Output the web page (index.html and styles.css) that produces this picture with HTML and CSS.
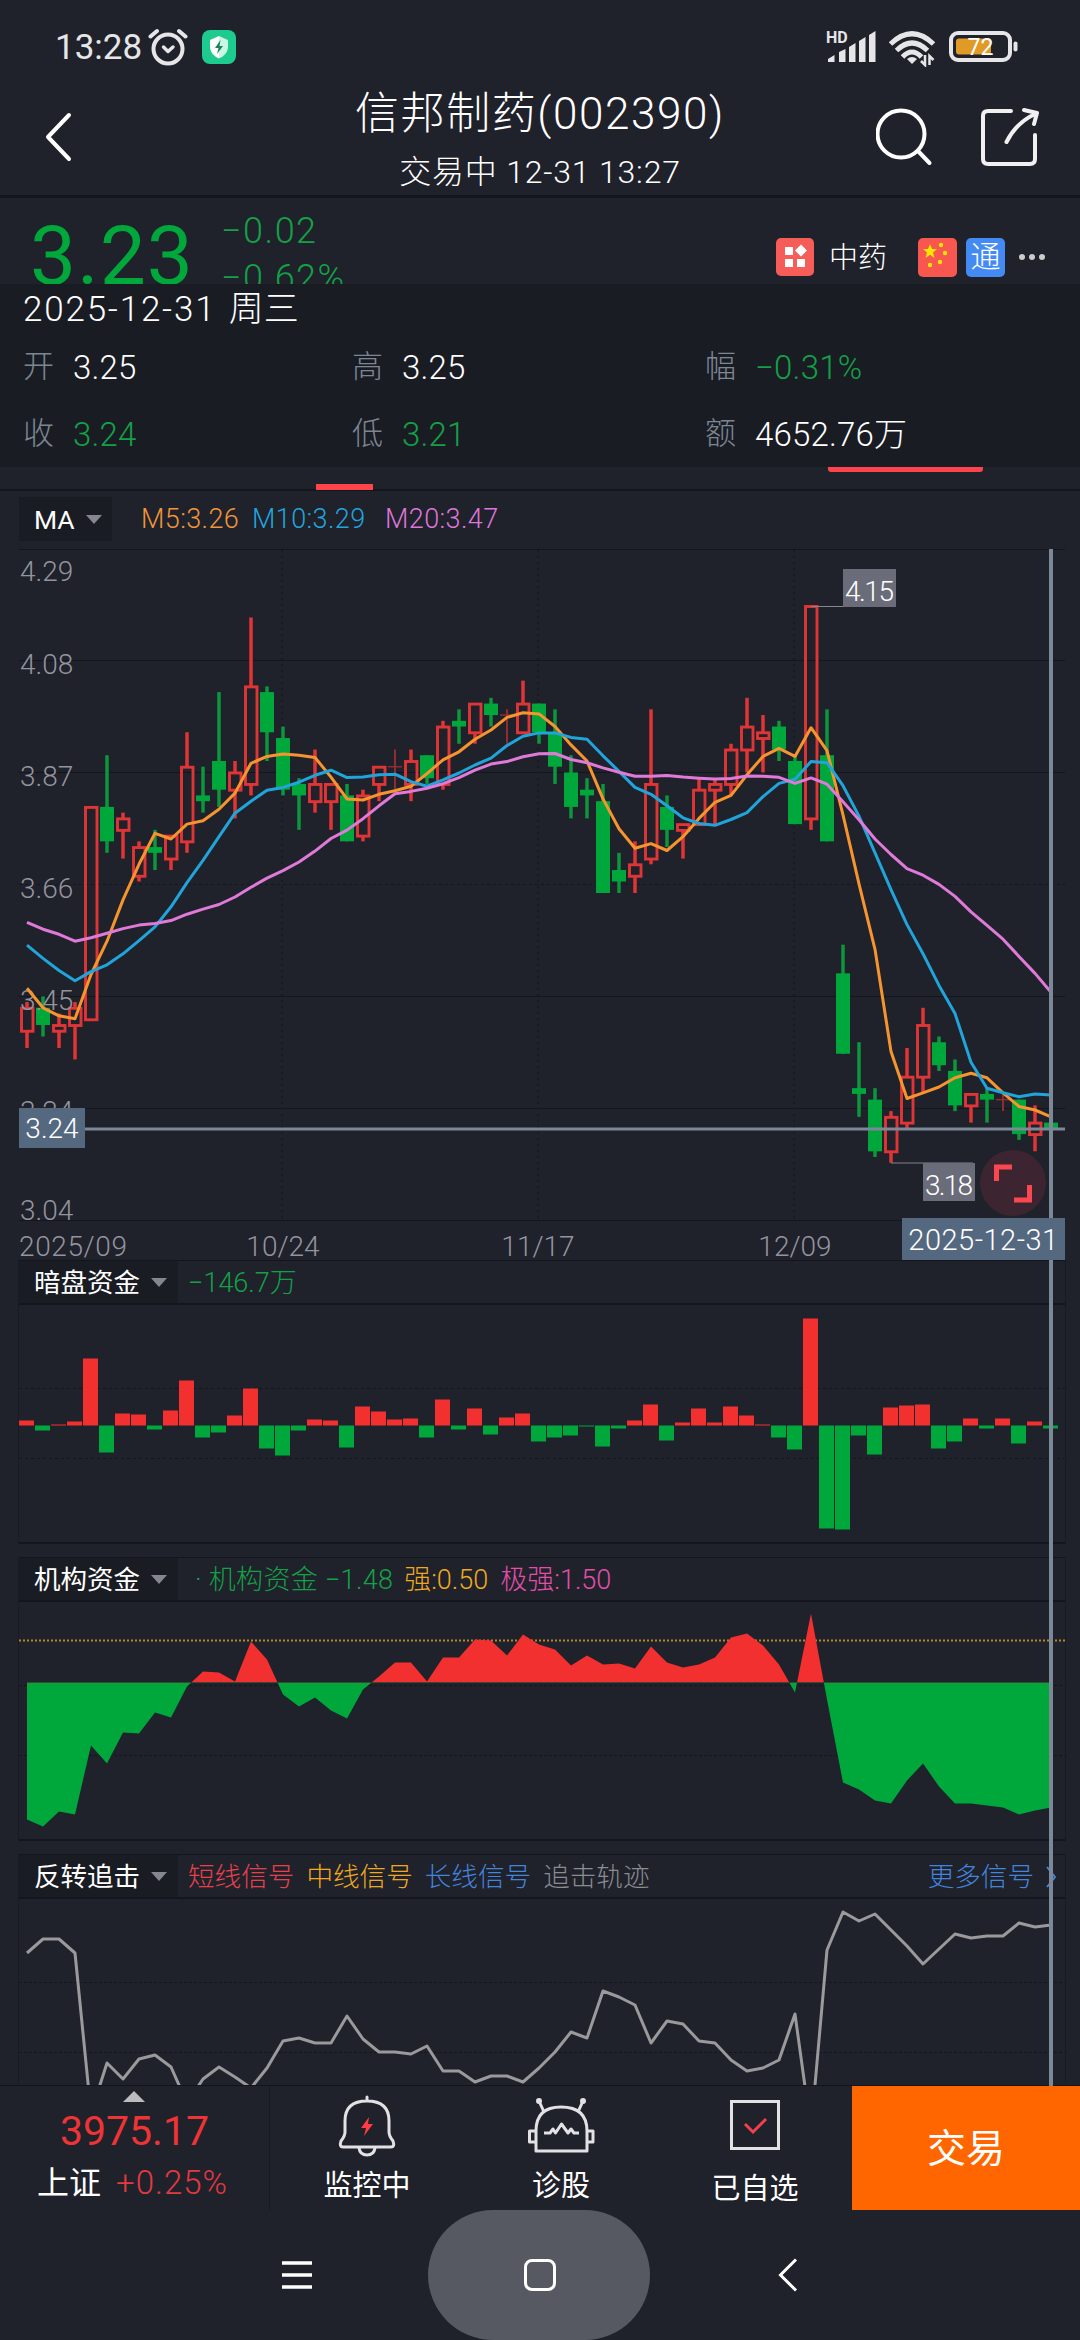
FILE: index.html
```html
<!DOCTYPE html>
<html lang="zh-CN">
<head>
    <meta charset="UTF-8">
    <title>信邦制药(002390)</title>
    <link rel="stylesheet" href="styles.css">
</head>
<body>
<div class="phone">

    <div class="status">
        <div class="status-left">
            <span class="time">13:28</span>
            <svg class="alarm" width="40" height="38" viewBox="0 0 40 38" fill="none" stroke="#e6e6e8" stroke-linecap="round">
                <circle cx="20" cy="21" r="14.5" stroke-width="4"/>
                <path d="M2.500 8.500 L9 3 M37.500 8.500 L31 3" stroke-width="4"/>
                <path d="M15.500 19 L20 23.500 L25 19" stroke-width="3.500" stroke-linejoin="round"/>
            </svg>
            <svg width="34" height="34" viewBox="0 0 34 34">
                <rect width="34" height="34" rx="8" fill="#1dcb8e"/>
                <path d="M17 6 L8 10 V18 Q9 25 17 28.500Z" fill="#fff"/>
                <path d="M17 6 L26 10 V18 Q25 25 17 28.500Z" fill="#c9f6e5"/>
                <path d="M18.500 10 L13 18 H16.500 L15 24 L21 16 H17.500Z" fill="#17845f"/>
            </svg>
        </div>
        <div class="status-right">
            <svg width="51" height="34" viewBox="-1 0 51 34" fill="#e6e6e8">
                <text x="0" y="13" class="hd">HD</text>
                <path d="M2 32 V29 L8.500 25 V32Z M13 32 V22 L19.500 19 V32Z M23 32 V17 L29.500 13 V32Z M33 32 V11 L39.500 7 V32Z M43 32 V5 L49.500 1 V32Z"/>
            </svg>
            <svg class="wifi" width="47" height="36" viewBox="0 0 47 36" fill="none" stroke="#e6e6e8" stroke-width="5">
                <path d="M1.500 13 Q23 -7.500 44.500 13"/>
                <path d="M7.500 19.500 Q23 4.500 38.500 19.500"/>
                <path d="M13.500 26 Q23 16 32.500 26"/>
                <path d="M18 28 Q23 24 28 28 L23 33Z" fill="#e6e6e8" stroke="none"/>
                <path d="M36 24 V34 L32 30 M40.500 34 V25 L44.500 29" stroke-width="2.500"/>
            </svg>
            <svg width="69" height="32" viewBox="0 0 69 32">
                <rect x="2" y="2" width="59" height="27" rx="7" fill="none" stroke="#e6e6e8" stroke-width="4"/>
                <rect x="7" y="7.500" width="35" height="16" rx="3" fill="#e09a25"/>
                <rect x="64.500" y="10.500" width="4" height="10" rx="2" fill="#e6e6e8"/>
                <text x="31.500" y="24" class="battery">72</text>
            </svg>
        </div>
    </div>

    <div class="header">
        <svg class="back" width="30" height="50" viewBox="0 0 30 50" fill="none" stroke="#fff" stroke-width="4" stroke-linecap="round" stroke-linejoin="round">
            <path d="M26 3 L5 25 L26 47"/>
        </svg>
        <div class="title">
            <div class="name">信邦制药(002390)</div>
            <div class="state">交易中 12-31 13:27</div>
        </div>
        <div class="actions">
            <svg width="58" height="60" viewBox="0 0 58 60" fill="none" stroke="#fff" stroke-width="4" stroke-linecap="round">
                <circle cx="25" cy="27" r="23.500"/>
                <path d="M42 44 L53.500 56"/>
            </svg>
            <svg width="60" height="60" viewBox="0 0 60 60" fill="none" stroke="#f0f0f0" stroke-width="4" stroke-linecap="round" stroke-linejoin="round">
                <path d="M31 4 H8 Q3 4 3 9 V52 Q3 57 8 57 H50 Q55 57 55 52 V28"/>
                <path d="M26.500 35 Q36 16 55 7 M44 3 L57 6 L54 17"/>
            </svg>
        </div>
    </div>

    <div class="quote">
        <div class="price">3.23</div>
        <div class="change">
            <div>−0.02</div>
            <div>−0.62%</div>
        </div>
        <div class="tags">
            <svg width="38" height="38" viewBox="0 0 38 38">
                <rect width="38" height="38" rx="5" fill="#f65c58"/>
                <path d="M9 9 h8 v8 h-8z M9 21 h8 v8 h-8z M21 21 h8 v8 h-8z M25 6.500 l6 6 l-6 6 l-6 -6z" fill="#fff"/>
            </svg>
            <span class="sector">中药</span>
            <svg width="39" height="39" viewBox="0 0 39 39">
                <rect width="39" height="39" rx="5" fill="#f8574f"/>
                <g fill="#ffe600">
                    <path d="M12 6 l2 5 h5 l-4 3.500 l1.500 5.500 l-4.500 -3.200 l-4.500 3.200 l1.500 -5.500 l-4 -3.500 h5z"/>
                    <circle cx="23" cy="7" r="2.200"/>
                    <circle cx="27" cy="15" r="2.200"/>
                    <circle cx="22" cy="24" r="2.200"/>
                    <circle cx="12" cy="27" r="2.200"/>
                </g>
            </svg>
            <span class="tong">通</span>
            <svg class="dots" width="28" height="8" viewBox="0 0 28 8" fill="#ccc">
                <circle cx="4" cy="4" r="3"/><circle cx="14" cy="4" r="3"/><circle cx="24" cy="4" r="3"/>
            </svg>
        </div>
    </div>

    <div class="info">
        <div class="info-date">2025-12-31 <span>周三</span></div>
        <div class="info-grid">
            <div><label>开</label><b>3.25</b></div>
            <div><label>高</label><b>3.25</b></div>
            <div><label>幅</label><b class="down">−0.31%</b></div>
            <div><label>收</label><b class="down">3.24</b></div>
            <div><label>低</label><b class="down">3.21</b></div>
            <div><label>额</label><b>4652.76万</b></div>
        </div>
    </div>

    <div class="tabs">
        <div class="tab-line small"></div>
        <div class="tab-line wide"></div>
    </div>

    <div class="ma-row">
        <div class="select ma">MA<i></i></div>
        <span class="m5">M5:3.26</span>
        <span class="m10">M10:3.29</span>
        <span class="m20">M20:3.47</span>
    </div>

    <div class="charts">
        <svg id="kline" class="kline" width="1080" height="711" viewBox="0 549 1080 711"></svg>

        <div class="panel">
            <div class="panel-head">
                <div class="select">暗盘资金<i></i></div>
                <span class="down">−146.7万</span>
            </div>
            <svg id="bars" width="1046" height="238" viewBox="19 1305 1046 238"></svg>
        </div>

        <div class="panel">
            <div class="panel-head">
                <div class="select">机构资金<i></i></div>
                <span class="down org">· 机构资金 −1.48</span>
                <span class="yellow">强:0.50</span>
                <span class="pink">极强:1.50</span>
            </div>
            <svg id="area" width="1046" height="238" viewBox="19 1602 1046 238"></svg>
        </div>

        <div class="panel last">
            <div class="panel-head signals">
                <div class="select">反转追击<i></i></div>
                <span class="red">短线信号</span>
                <span class="yellow">中线信号</span>
                <span class="blue">长线信号</span>
                <span class="gray">追击轨迹</span>
                <span class="blue more">更多信号
                    <svg width="12" height="24" viewBox="0 0 12 24" fill="none" stroke="#4384dc" stroke-width="2"><path d="M2 2 L10 12 L2 22"/></svg>
                </span>
            </div>
            <svg id="track" width="1046" height="186" viewBox="19 1899 1046 186"></svg>
        </div>

        <div class="cross"></div>
        <div class="cross-date">2025-12-31</div>
    </div>

    <div class="bottom">
        <div class="index">
            <i></i>
            <div class="index-value">3975.17</div>
            <div class="index-name">上证<span>+0.25%</span></div>
        </div>
        <div class="item">
            <svg width="60" height="62" viewBox="0 0 60 62" fill="none" stroke="#e2e2e4" stroke-width="3" stroke-linejoin="round" stroke-linecap="round">
                <path d="M30 2 V6 M8 26 Q8 6 30 6 Q52 6 52 26 V37 Q52 41 56 46 Q58 52 54 52 H6 Q2 52 4 46 Q8 41 8 37Z"/>
                <path d="M22 53 Q23 60 30 60 Q37 60 38 53"/>
                <path d="M32 22 L24 33 H29 L27 41 L36 29 H31Z" fill="#ff3b45" stroke="none"/>
            </svg>
            <span>监控中</span>
        </div>
        <div class="item">
            <svg width="68" height="62" viewBox="0 0 68 62" fill="none" stroke="#e2e2e4" stroke-width="3" stroke-linejoin="round">
                <path d="M9 56 V36 Q9 12 34 12 Q60 12 60 36 V56Z M9 36 H2.500 V47 H9 M60 36 H66 V47 H60"/>
                <path d="M17 17 L12 6 M51 17 L56 6"/>
                <circle cx="12" cy="6" r="1.500"/><circle cx="56" cy="6" r="1.500"/>
                <path d="M17 38 H23 L26 34 L28.500 38 L34.500 29 L41 38 L44 34 L47 38 H52"/>
            </svg>
            <span>诊股</span>
        </div>
        <div class="item added">
            <svg width="60" height="62" viewBox="0 0 60 62" fill="none" stroke="#e2e2e4" stroke-width="3">
                <rect x="6.500" y="6.500" width="47" height="47"/>
                <path d="M20 29 L28 37 L41 24" stroke="#f2404c"/>
            </svg>
            <span>已自选</span>
        </div>
        <div class="trade">交易</div>
    </div>

    <div class="nav">
        <svg class="menu" width="30" height="28" viewBox="0 0 30 28" stroke="#fff" stroke-width="3.500"><path d="M0 2 H30 M0 14 H30 M0 26 H30"/></svg>
        <div class="home"><i></i></div>
        <svg class="nav-back" width="20" height="34" viewBox="0 0 20 34" fill="none" stroke="#fff" stroke-width="3"><path d="M18 1.500 L2.500 17 L18 32.500"/></svg>
    </div>
</div>
<script src="chart.js"></script>
</body>
</html>
```

FILE: styles.css
```css
* {
    box-sizing: border-box;
}

body {
    margin: 0;
    background: #1f212b;
    color: #fff;
    font-family: Roboto, "Noto Sans CJK SC", sans-serif;
    font-weight: 300;
}

svg {
    display: block;
    flex: none;
}

i {
    display: block;
    font-style: normal;
}

.phone {
    width: 1080px;
    height: 2340px;
    display: flex;
    flex-direction: column;
    overflow: hidden;
}

.phone > div {
    flex: none;
}

.down { color: #14a046; }
.yellow { color: #f0a91f; }
.pink { color: #e050a8; }
.red { color: #e8414b; }
.blue { color: #4384dc; }
.gray { color: #8b8c91; }

/* 状态栏 */
.status {
    height: 94px;
    display: flex;
    justify-content: space-between;
    padding: 0 62px 0 55px;
}

.status-left, .status-right {
    display: flex;
    align-items: center;
    height: 94px;
}

.time {
    font-size: 35px;
    font-weight: 400;
    color: #e6e6e8;
    width: 93px;
}

.alarm {
    margin-right: 14px;
}

.wifi {
    margin: 3px 13px 0 13px;
}

.hd {
    font-size: 16px;
    font-weight: 700;
}

.battery {
    font-size: 23px;
    font-weight: 400;
    fill: #fff;
    text-anchor: middle;
}

/* 标题栏 */
.header {
    height: 104px;
    border-bottom: 3px solid #14161e;
    display: flex;
    padding: 0 40px 0 43px;
}

.back {
    margin-top: 18px;
}

.title {
    margin-left: 162px;
    width: 610px;
    text-align: center;
}

.name {
    font-size: 44px;
    line-height: 40px;
    letter-spacing: 1.6px;
    white-space: nowrap;
}

.state {
    font-size: 32px;
    line-height: 36px;
    margin-top: 20px;
    letter-spacing: 0.8px;
    white-space: nowrap;
}

.actions {
    display: flex;
    gap: 46px;
    padding-top: 13px;
    margin-left: 31px;
}

/* 报价 */
.quote {
    height: 86px;
    overflow: hidden;
    display: flex;
    padding-left: 30px;
    color: #00a83c;
}

.price {
    width: 191px;
    font-size: 82px;
    line-height: 96px;
    margin-top: 10px;
    letter-spacing: 1px;
    font-weight: 400;
}

.change {
    font-size: 36px;
    line-height: 47px;
    padding-top: 10px;
    letter-spacing: 1.5px;
    color: #14a046;
}

.tags {
    margin-left: auto;
    padding: 0 34px 0 0;
    display: flex;
    align-items: center;
    height: 118px;
    color: #fff;
}

.sector {
    font-size: 29px;
    line-height: 40px;
    margin: 2px 31px 0 15px;
}

.tong {
    width: 39px;
    height: 39px;
    margin: 0 13px 0 9px;
    border-radius: 5px;
    background: #438bf2;
    font-size: 30px;
    line-height: 38px;
    text-align: center;
}

/* 当日行情浮层 */
.info {
    height: 183px;
    background: #1a1c24;
    padding: 0 23px;
}

.info-date {
    height: 50px;
    font-size: 35px;
    line-height: 52px;
    letter-spacing: 1.8px;
}

.info-date span {
    letter-spacing: 0;
    margin-left: 2px;
}

.info-grid {
    display: grid;
    grid-template-columns: 329px 353px 1fr;
    grid-auto-rows: 67px;
    align-items: center;
}

.info-grid div {
    display: flex;
    align-items: center;
    height: 40px;
}

.info-grid label {
    width: 50px;
    font-size: 31px;
    line-height: 40px;
    margin-top: -1px;
    color: #7d8794;
}

.info-grid b {
    font-size: 33px;
    line-height: 40px;
    font-weight: 300;
    letter-spacing: 0.2px;
    white-space: nowrap;
}

.tabs {
    height: 24px;
    border-bottom: 2px solid #14161e;
    display: flex;
    align-items: flex-start;
}

.tab-line {
    background: #ff434b;
}

.tab-line.small {
    width: 57px;
    height: 6px;
    margin: 17px 455px 0 316px;
}

.tab-line.wide {
    width: 155px;
    height: 5px;
    border-radius: 0 0 3px 3px;
}

/* 均线 */
.ma-row {
    height: 58px;
    display: flex;
    align-items: center;
    padding: 0 19px 2px;
    font-size: 27px;
    letter-spacing: 0.4px;
    white-space: nowrap;
}

.select {
    width: 159px;
    height: 44px;
    background: #1a1c24;
    padding-left: 15px;
    font-size: 26.5px;
    letter-spacing: 0;
    display: flex;
    align-items: center;
    gap: 11px;
    font-weight: 400;
}

.select i {
    border: 8px solid transparent;
    border-top: 9px solid #85868f;
    border-bottom: 0;
}

.select.ma {
    width: 93px;
    margin-right: 29px;
}

.m5 { color: #f0953a; width: 111px; }
.m10 { color: #22a5dc; width: 133px; }
.m20 { color: #dd76d8; }

/* 图表 */
.charts {
    position: relative;
    height: 1537px;
}

.kline text {
    font-size: 28px;
    fill: #94949e;
    font-weight: 300;
}

.kline .tag-text {
    fill: #fff;
}

.panel {
    width: 1046px;
    height: 284px;
    margin: 0 0 13px 19px;
    border: 1px solid #14161e;
    border-width: 1px 0 2px;
    box-shadow: -1px 0 #191b24, 1px 0 #191b24;
}

.panel.last {
    height: 232px;
    margin-bottom: 0;
    border-bottom: 0;
}

.panel-head {
    height: 44px;
    border-bottom: 2px solid #14161e;
    display: flex;
    align-items: center;
    font-size: 27px;
    line-height: 38px;
    white-space: nowrap;
}

.panel-head.signals {
    font-size: 26.6px;
}

.panel-head .select {
    height: 42px;
    margin-right: 10px;
    padding-top: 1px;
}

.panel-head > span {
    margin-right: 12px;
    padding-top: 1px;
}

.panel-head .org {
    margin-left: 7px;
    margin-right: 11px;
    letter-spacing: 0.3px;
}

.panel-head .more {
    margin: 0 8px 0 auto;
    display: flex;
    align-items: center;
    gap: 11px;
}

.cross {
    position: absolute;
    left: 1049px;
    top: 0;
    width: 4px;
    height: 1537px;
    background: #7c8798;
}

.cross-date {
    position: absolute;
    left: 902px;
    top: 669px;
    width: 163px;
    height: 42px;
    background: #54697f;
    font-size: 29px;
    line-height: 45px;
    letter-spacing: 0.5px;
    text-align: center;
}

/* 底部工具栏 */
.bottom {
    height: 124px;
    display: flex;
    box-shadow: 0 -1px #12141b;
}

.index {
    width: 270px;
    border-right: 1px solid #181a22;
    text-align: center;
    white-space: nowrap;
}

.index i {
    width: 0;
    margin: 5px auto 0 123px;
    border: 11px solid transparent;
    border-bottom: 11px solid #bcbcbe;
    border-top: 0;
}

.index-value {
    font-size: 41px;
    line-height: 48px;
    margin-top: 5px;
    color: #ee3434;
    font-weight: 400;
}

.index-name {
    font-size: 32px;
    line-height: 44px;
    margin-top: 6px;
    padding-right: 4px;
    font-weight: 400;
}

.index-name span {
    margin-left: 15px;
    font-size: 33px;
    font-weight: 300;
    letter-spacing: 1px;
    color: #e03a42;
}

.item {
    width: 194px;
    padding-top: 9px;
    display: flex;
    flex-direction: column;
    align-items: center;
    font-size: 29px;
    line-height: 40px;
    font-weight: 400;
}

.item span {
    margin-top: 9px;
}

.item.added span {
    margin-top: 12px;
}

.trade {
    flex: 1;
    background: #ff6600;
    font-size: 39px;
    line-height: 127px;
    text-align: center;
    font-weight: 400;
}

/* 系统导航 */
.nav {
    height: 130px;
    display: flex;
    align-items: center;
}

.menu {
    margin: 0 116px 0 282px;
}

.home {
    width: 222px;
    height: 130px;
    border-radius: 65px;
    background: #565862;
    display: flex;
    align-items: center;
    justify-content: center;
}

.home i {
    width: 32px;
    height: 32px;
    margin-left: 2px;
    border: 3px solid #fff;
    border-radius: 8px;
}

.nav-back {
    margin-left: 128px;
}
```

FILE: chart.js
```js
const RED = "#e03536", GREEN = "#00a83c", LINE = "#14161e";

// [开, 收, 高, 低]
const days = [
    [3.41,3.45,3.46,3.38],[3.45,3.42,3.47,3.40],[3.41,3.42,3.44,3.38],[3.42,3.45,3.46,3.36],[3.43,3.80,3.80,3.43],
    [3.80,3.74,3.89,3.72],[3.76,3.78,3.79,3.71],[3.68,3.73,3.74,3.67],[3.73,3.72,3.76,3.69],[3.71,3.75,3.75,3.69],
    [3.74,3.87,3.93,3.72],[3.82,3.81,3.87,3.79],[3.88,3.83,4.00,3.80],[3.83,3.86,3.88,3.78],[3.84,4.01,4.13,3.82],
    [4.00,3.93,4.01,3.88],[3.92,3.83,3.94,3.82],[3.84,3.82,3.85,3.76],[3.81,3.84,3.90,3.79],[3.81,3.84,3.84,3.76],
    [3.82,3.74,3.84,3.74],[3.75,3.82,3.83,3.74],[3.84,3.87,3.87,3.81],[3.87,3.87,3.90,3.83],[3.84,3.88,3.90,3.81],
    [3.89,3.85,3.89,3.84],[3.84,3.94,3.95,3.83],[3.95,3.94,3.97,3.91],[3.93,3.98,3.98,3.91],[3.98,3.96,3.99,3.94],
    [3.96,3.96,3.97,3.91],[3.93,3.98,4.02,3.93],[3.98,3.93,3.98,3.91],[3.93,3.87,3.97,3.84],[3.86,3.80,3.89,3.78],
    [3.83,3.82,3.85,3.78],[3.81,3.65,3.84,3.65],[3.69,3.67,3.72,3.65],[3.68,3.70,3.74,3.65],[3.71,3.84,3.97,3.70],
    [3.80,3.76,3.82,3.73],[3.76,3.77,3.77,3.71],[3.77,3.83,3.85,3.77],[3.83,3.84,3.85,3.77],[3.84,3.90,3.91,3.82],
    [3.90,3.94,3.99,3.86],[3.92,3.93,3.96,3.86],[3.94,3.90,3.95,3.88],[3.88,3.77,3.89,3.77],[3.78,4.15,4.15,3.76],
    [3.89,3.74,3.97,3.74],[3.51,3.37,3.56,3.37],[3.31,3.30,3.39,3.26],[3.29,3.20,3.31,3.19],[3.20,3.26,3.27,3.18],
    [3.25,3.33,3.38,3.24],[3.33,3.42,3.45,3.30],[3.39,3.35,3.40,3.34],[3.34,3.28,3.36,3.27],[3.28,3.30,3.30,3.25],
    [3.30,3.29,3.31,3.25],[3.29,3.29,3.30,3.27],[3.29,3.23,3.29,3.22],[3.23,3.25,3.28,3.20],[3.25,3.24,3.25,3.21]
];

// 均线起始段
const ma5Head = [3.484,3.450,3.436,3.431];
const ma10Head = [3.559,3.536,3.515,3.497,3.513,3.525,3.544,3.567,3.591];
const ma20Head = [3.599,3.587,3.578,3.566,3.572,3.580,3.588,3.594,3.597,3.602,3.613,3.622,3.630,3.643,3.660,3.676,3.689,3.704,3.723];

const funds = [5,-5,1,4,67,-27,12,11,-4,15,45,-12,-7,10,37,-23,-30,-5,6,5,-22,19,14,6,7,-12,26,-4,17,-9,8,12,-16,
    -12,-10,-1,-21,-3,5,21,-15,3,17,3,19,10,1,-12,-24,107,-103,-104,-10,-29,18,20,21,-23,-16,7,-3,7,-18,4,-3];

const org = [-137,-144,-129,-132,-63,-81,-50,-51,-30,-35,-4,11,10,1,41,23,-12,-24,-15,-28,-36,-7,6,20,20,1,25,25,43,42,
    27,48,38,33,17,27,18,19,14,36,20,15,18,25,45,49,37,18,-10,69,-17,-100,-107,-118,-121,-98,-81,-104,-121,-121,-123,-125,-132,-128,-125];

const track = [55,41,41,55,215,165,181,161,157,169,205,181,169,179,190,170,143,140,145,145,118,141,154,154,156,148,173,173,184,178,
    178,184,170,154,134,140,93,99,107,145,123,126,143,145,162,173,170,162,116,232,52,14,23,16,32,48,66,51,36,40,38,38,25,29,27];

const px = i => 27 + i * 16;
const py = p => 606 + (4.15 - p) * 574;

function line(x1, y1, x2, y2, color, w, dash) {
    return `<line x1="${x1}" y1="${y1}" x2="${x2}" y2="${y2}" stroke="${color}" stroke-width="${w}" stroke-dasharray="${dash || "none"}"/>`;
}

function rect(x, y, w, h, fill) {
    return `<rect x="${x}" y="${y}" width="${w}" height="${h}" fill="${fill}"/>`;
}

function average(n, head) {
    return days.map((d, i) => {
        if (i < head.length) return head[i];
        let sum = 0;
        for (let k = i - n + 1; k <= i; k++) sum += days[k][1];
        return sum / n;
    });
}

function curve(points, color, w) {
    return `<polyline points="${points.join(" ")}" fill="none" stroke="${color}" stroke-width="${w}" stroke-linejoin="round"/>`;
}

function drawKline() {
    let s = "";
    [549.5, 660.5, 772.5, 884.5, 996.5, 1108.5, 1220.5].forEach((y, i) => {
        s += line(19, y, 1065, y, LINE, 1, i === 3 ? "3 3" : "");
    });
    [282, 538, 794].forEach(x => s += line(x, 550, x, 1220, "#191b24", 2, "2 4"));

    days.forEach(([o, c, h, l], i) => {
        const x = px(i), top = py(Math.max(o, c)), bot = py(Math.min(o, c));
        if (o === c) {
            s += line(x, py(h), x, py(l), "#8f2c32", 2) + line(x - 7, top, x + 7, top, "#8f2c32", 1.5);
        } else if (c > o) {
            s += line(x, py(h), x, top, RED, 3.5) + line(x, bot, x, py(l), RED, 3.5);
            s += `<rect x="${x - 5.5}" y="${top + .5}" width="11.500" height="${bot - top}" fill="none" stroke="${RED}" stroke-width="2.9"/>`;
        } else {
            s += line(x, py(h), x, py(l), "#0d963c", 3.5) + rect(x - 7, top, 14, bot - top, GREEN);
        }
    });

    [["4.29", 581], ["4.08", 674], ["3.87", 786], ["3.66", 898], ["3.45", 1010], ["3.24", 1121], ["3.04", 1220]]
        .forEach(([t, y]) => s += `<text x="20" y="${y}">${t}</text>`);
    s += `<text x="19" y="1256" textLength="108">2025/09</text>`;
    [["10/24", 283], ["11/17", 538], ["12/09", 795]]
        .forEach(([t, x]) => s += `<text x="${x}" y="1256" text-anchor="middle">${t}</text>`);

    [[average(5, ma5Head), "#f6952f"], [average(10, ma10Head), "#20a4da"], [average(20, ma20Head), "#e07ad8"]]
        .forEach(([m, color]) => s += curve(m.map((v, i) => px(i) + "," + py(v).toFixed(1)), color, 3));

    // 最高、最低价
    s += line(811, 606.5, 894, 606.5, "#85868f", 1) + rect(843, 569, 53, 38, "#6b6c79");
    s += `<text x="869.5" y="601" text-anchor="middle" textLength="49" class="tag-text">4.15</text>`;
    s += line(891, 1163, 973, 1163, "#85868f", 1) + rect(923, 1163, 52, 38, "#6b6c79");
    s += `<text x="949" y="1195" text-anchor="middle" textLength="48" class="tag-text">3.18</text>`;

    // 十字线价格
    s += line(85, 1129, 1065, 1129, "#7c8798", 3) + rect(19, 1108, 66, 40, "#54697f");
    s += `<text x="52" y="1138" text-anchor="middle" class="tag-text">3.24</text>`;

    s += `<circle cx="1013" cy="1183" r="33" fill="#3c2530"/>`;
    s += `<path d="M996.5 1181 V1167 H1012 M1014 1200 H1029.500 V1185" fill="none" stroke="#fb4850" stroke-width="5"/>`;
    document.getElementById("kline").innerHTML = s;
}

function drawFunds() {
    let s = line(19, 1388.5, 1065, 1388.5, LINE, 1, "3 3") + line(19, 1458.5, 1065, 1458.5, LINE, 1, "3 3");
    funds.forEach((v, i) => {
        s += rect(px(i) - 8, v > 0 ? 1425.5 - v : 1425.5, 15, Math.abs(v), v > 0 ? "#f33030" : GREEN);
    });
    document.getElementById("bars").innerHTML = s;
}

function drawOrg() {
    const zero = 1682.5;
    const pts = org.map((v, i) => px(i) + "," + (zero - v)).join(" ");
    const poly = `27,${zero} ${pts} 1051,${zero}`;
    let s = line(19, 1685.5, 1065, 1685.5, LINE, 1, "3 2") + line(19, 1755.5, 1065, 1755.5, LINE, 1, "3 2");
    s += `<clipPath id="up"><rect x="0" y="1600" width="1080" height="82.5"/></clipPath>`;
    s += `<clipPath id="dn"><rect x="0" y="1682.5" width="1080" height="160"/></clipPath>`;
    s += line(19, 1640.5, 1065, 1640.5, "#b8862a", 2, "2 2");
    s += `<polygon points="${poly}" fill="#f33030" clip-path="url(#up)"/><polygon points="${poly}" fill="${GREEN}" clip-path="url(#dn)"/>`;
    document.getElementById("area").innerHTML = s;
}

function drawTrack() {
    let s = line(19, 1982.5, 1065, 1982.5, LINE, 1, "3 2") + line(19, 2052.5, 1065, 2052.5, LINE, 1, "3 2");
    s += curve(track.map((v, i) => px(i) + "," + (1898 + v)), "#9a9a9c", 3);
    document.getElementById("track").innerHTML = s;
}

drawKline();
drawFunds();
drawOrg();
drawTrack();
```
